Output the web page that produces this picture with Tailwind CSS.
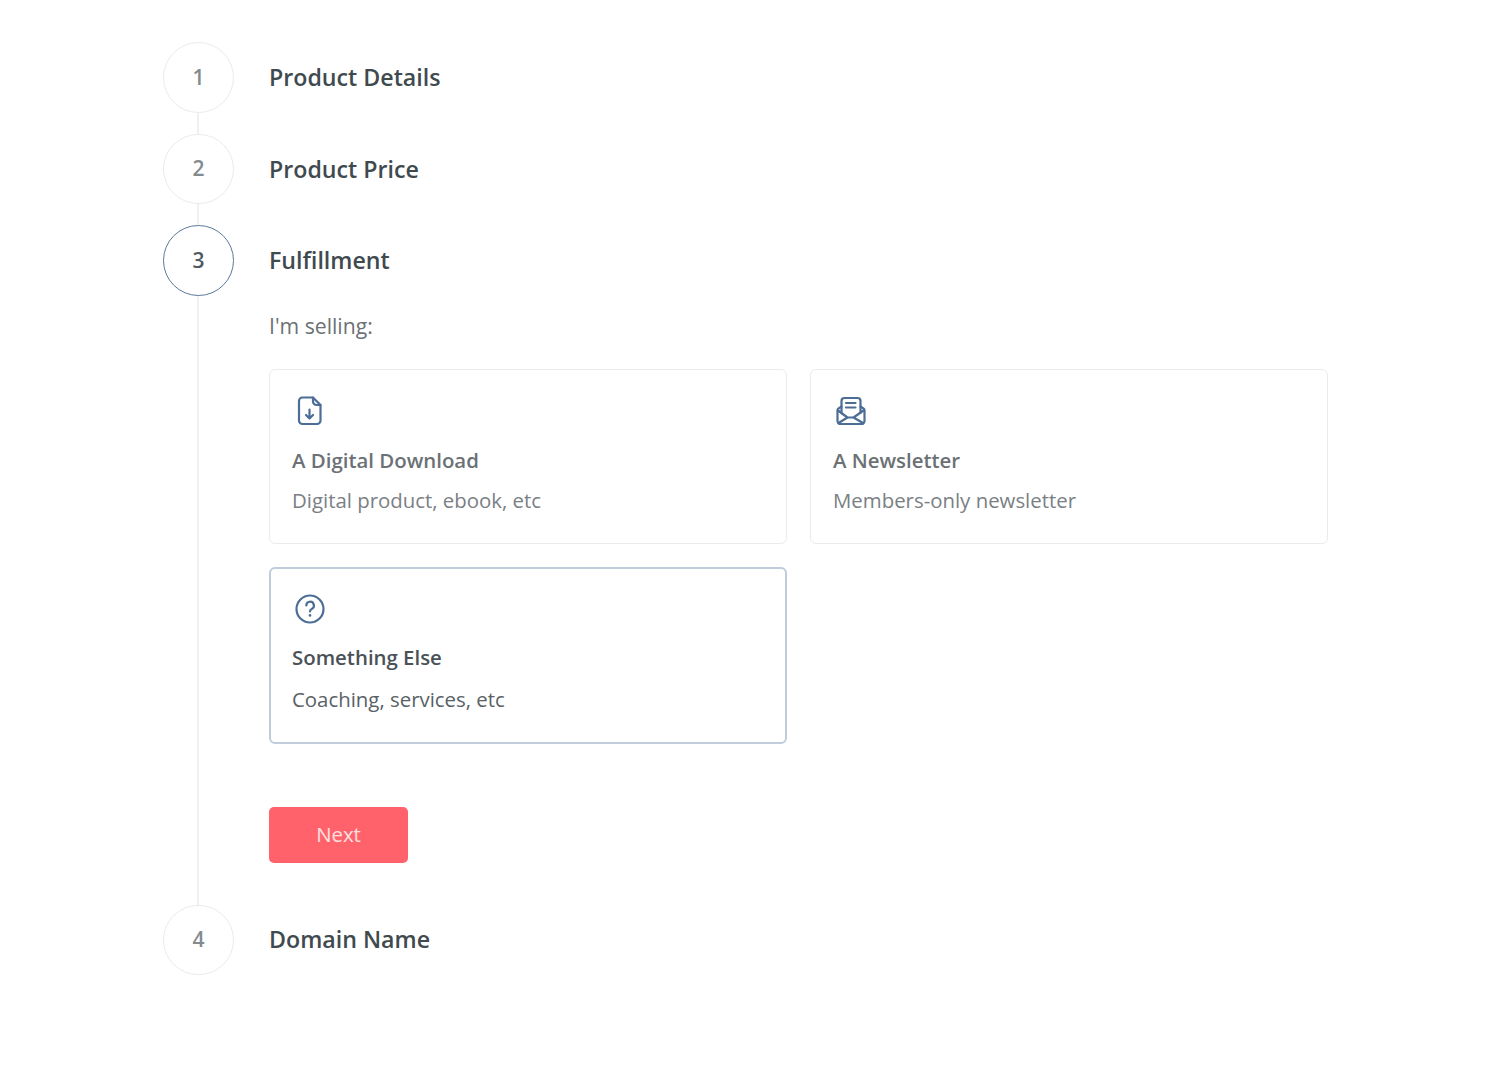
<!DOCTYPE html>
<html lang="en">
<head>
    <meta charset="UTF-8">
    <title>Fulfillment</title>
    <script src="https://cdn.jsdelivr.net/npm/@tailwindcss/browser@4"></script>
</head>
<body class="bg-white font-['Open_Sans',sans-serif] text-[#3f4a4f]">
    <div class="w-[1500px] h-[1089px] pl-[163px] pt-[42px] overflow-hidden">

        <!-- step 1 -->
        <div class="flex h-[92px]">
            <div class="flex flex-col items-center w-[71px]">
                <div class="w-[71px] h-[71px] shrink-0 rounded-full border border-[#e9ebec] flex items-center justify-center text-[21px] font-semibold text-[#838b8f]">1</div>
                <div class="w-[2px] mr-[2px] flex-1 bg-[#eff0f1]"></div>
            </div>
            <h2 class="ml-[35px] h-[71px] leading-[71px] text-[23.2px] font-semibold">Product Details</h2>
        </div>

        <!-- step 2 -->
        <div class="flex h-[91px]">
            <div class="flex flex-col items-center w-[71px]">
                <div class="w-[71px] h-[70px] shrink-0 rounded-full border border-[#e9ebec] flex items-center justify-center text-[21px] font-semibold text-[#838b8f]">2</div>
                <div class="w-[2px] mr-[2px] flex-1 bg-[#eff0f1]"></div>
            </div>
            <h2 class="ml-[35px] h-[71px] leading-[71px] text-[23.2px] font-semibold">Product Price</h2>
        </div>

        <!-- step 3, open -->
        <div class="flex h-[680px]">
            <div class="flex flex-col items-center w-[71px]">
                <div class="w-[71px] h-[71px] shrink-0 rounded-full border border-[#5c7a9c] flex items-center justify-center text-[21px] font-semibold text-[#4f595e]">3</div>
                <div class="w-[2px] mr-[2px] flex-1 bg-[#eff0f1]"></div>
            </div>
            <div class="ml-[35px] w-[1059px]">
                <h2 class="h-[71px] leading-[71px] text-[23.2px] font-semibold">Fulfillment</h2>
                <p class="mt-[15px] h-[31px] leading-[30px] text-[21.200px] text-[#6b7175]">I'm selling:</p>

                <div class="mt-[27px] grid grid-cols-[518px_518px] gap-x-[23px] gap-y-[23px]">
                    <div class="h-[175px] rounded-[6px] border border-[#e9ebec] pl-[22px] pt-[23px]">
                        <svg class="w-[36px] h-[36px]" viewBox="0 0 36 36" fill="none" stroke="#4c6d96" stroke-width="2.200" stroke-linecap="round" stroke-linejoin="round">
                            <path d="M10.500 4.500h10.500l7.500 7.500v15.500a3.500 3.500 0 0 1-3.500 3.500H10.500a3.500 3.500 0 0 1-3.500-3.500V8a3.500 3.500 0 0 1 3.500-3.500z"/>
                            <path d="M21 4.500v4a3.500 3.500 0 0 0 3.500 3.500h4"/>
                            <path d="M17.500 16.500v9M14 22l3.500 3.500L21 22"/>
                        </svg>
                        <h3 class="mt-[16px] leading-[30px] text-[20.400px] font-semibold text-[#6b7175]">A Digital Download</h3>
                        <p class="mt-[10px] leading-[30px] text-[20.400px] text-[#7a8084]">Digital product, ebook, etc</p>
                    </div>

                    <div class="h-[175px] rounded-[6px] border border-[#e9ebec] pl-[22px] pt-[23px]">
                        <svg class="w-[36px] h-[36px]" viewBox="0 0 36 36" fill="none" stroke="#4c6d96" stroke-width="2.200" stroke-linecap="round" stroke-linejoin="round">
                            <path d="M8.500 13.500l-3.200 2.200a2 2 0 0 0-.8 1.600V28a3 3 0 0 0 3 3h21a3 3 0 0 0 3-3V17.300a2 2 0 0 0-.8-1.600l-3.200-2.200"/>
                            <path d="M8.500 20V8a3 3 0 0 1 3-3h13a3 3 0 0 1 3 3v12"/>
                            <path d="M13 10h9.500M13 14.500h9.500"/>
                            <path d="M5 17.500l9.500 7h6l10-7M5.500 30l9-5.500M30 30l-9.500-5.500"/>
                        </svg>
                        <h3 class="mt-[16px] leading-[30px] text-[20.400px] font-semibold text-[#6b7175]">A Newsletter</h3>
                        <p class="mt-[10px] leading-[30px] text-[20.400px] text-[#7a8084]">Members-only newsletter</p>
                    </div>

                    <div class="h-[177px] rounded-[6px] border-2 border-[#bfcddb] pl-[21px] pt-[22px]">
                        <svg class="w-[36px] h-[36px]" viewBox="0 0 36 36" fill="none" stroke="#4c6d96" stroke-width="2.200" stroke-linecap="round" stroke-linejoin="round">
                            <circle cx="18" cy="18" r="13.500"/>
                            <path d="M14.300 14.500a3.800 3.800 0 1 1 5.500 3.400c-1.100.6-1.800 1.300-1.800 2.600"/>
                            <path d="M18 24.300v.1" stroke-width="2.600"/>
                        </svg>
                        <h3 class="mt-[15px] leading-[30px] text-[20.400px] font-semibold text-[#4a5257]">Something Else</h3>
                        <p class="mt-[12px] leading-[30px] text-[20.400px] text-[#596166]">Coaching, services, etc</p>
                    </div>
                </div>

                <button class="mt-[63px] block w-[139px] h-[56px] pb-[2px] rounded-[5px] bg-[#ff626b] text-[20.400px] text-white/80">Next</button>
            </div>
        </div>

        <!-- step 4 -->
        <div class="flex">
            <div class="w-[71px] h-[70px] shrink-0 rounded-full border border-[#e9ebec] flex items-center justify-center text-[21px] font-semibold text-[#838b8f]">4</div>
            <h2 class="ml-[35px] h-[70px] leading-[69px] text-[23.2px] font-semibold">Domain Name</h2>
        </div>
    </div>
</body>
</html>
